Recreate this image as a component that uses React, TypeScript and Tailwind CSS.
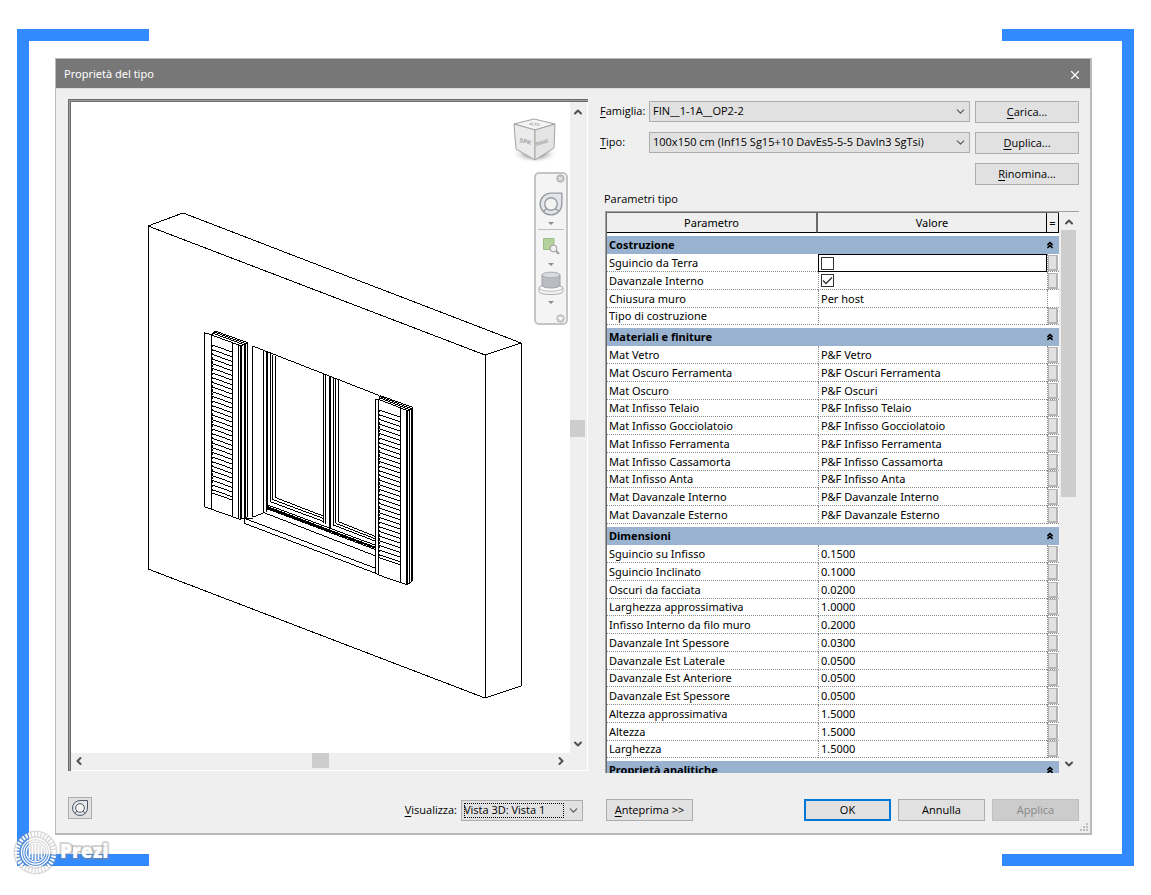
import { type ReactNode, useState } from "react";
import { ChevronDown, ChevronLeft, ChevronRight, ChevronsUp, ChevronUp, X } from "lucide-react";

type Param = {
  name: string;
  value: string | boolean;
  noButton?: boolean;
};

const groups: { title: string; params: Param[] }[] = [
  {
    title: "Costruzione",
    params: [
      { name: "Sguincio da Terra", value: false },
      { name: "Davanzale Interno", value: true },
      { name: "Chiusura muro", value: "Per host", noButton: true },
      { name: "Tipo di costruzione", value: "" },
    ],
  },
  {
    title: "Materiali e finiture",
    params: [
      { name: "Mat Vetro", value: "P&F Vetro" },
      { name: "Mat Oscuro Ferramenta", value: "P&F Oscuri Ferramenta" },
      { name: "Mat Oscuro", value: "P&F Oscuri" },
      { name: "Mat Infisso Telaio", value: "P&F Infisso Telaio" },
      { name: "Mat Infisso Gocciolatoio", value: "P&F Infisso Gocciolatoio" },
      { name: "Mat Infisso Ferramenta", value: "P&F Infisso Ferramenta" },
      { name: "Mat Infisso Cassamorta", value: "P&F Infisso Cassamorta" },
      { name: "Mat Infisso Anta", value: "P&F Infisso Anta" },
      { name: "Mat Davanzale Interno", value: "P&F Davanzale Interno" },
      { name: "Mat Davanzale Esterno", value: "P&F Davanzale Esterno" },
    ],
  },
  {
    title: "Dimensioni",
    params: [
      { name: "Sguincio su Infisso", value: "0.1500" },
      { name: "Sguincio Inclinato", value: "0.1000" },
      { name: "Oscuri da facciata", value: "0.0200" },
      { name: "Larghezza approssimativa", value: "1.0000" },
      { name: "Infisso Interno da filo muro", value: "0.2000" },
      { name: "Davanzale Int Spessore", value: "0.0300" },
      { name: "Davanzale Est Laterale", value: "0.0500" },
      { name: "Davanzale Est Anteriore", value: "0.0500" },
      { name: "Davanzale Est Spessore", value: "0.0500" },
      { name: "Altezza approssimativa", value: "1.5000" },
      { name: "Altezza", value: "1.5000" },
      { name: "Larghezza", value: "1.5000" },
    ],
  },
  { title: "Proprietà analitiche", params: [] },
];

export default function App() {
  return (
    <div className="min-h-screen bg-white px-[17px] pt-[29px] pb-7 text-black">
      <main className="relative">
        <BracketEnds />
        <div className="border-x-[12px] border-[#328aff] pt-[17px] pr-[30px] pb-[19px] pl-[26px]">
          <TypeDialog />
        </div>
        <BracketEnds />
        <PreziMark />
      </main>
    </div>
  );
}

function BracketEnds() {
  return (
    <div className="flex justify-between">
      <div className="h-3 w-[132px] bg-[#328aff]" />
      <div className="h-3 w-[132px] bg-[#328aff]" />
    </div>
  );
}

function TypeDialog() {
  return (
    <section
      aria-label="Proprietà del tipo"
      className="relative border border-r-2 border-b-2 border-[#b9b9b9] bg-[#efefef] font-['Open_Sans',sans-serif] text-[11px]"
    >
      <header className="flex h-[30px] items-center justify-between border-b border-[#dcdcdc] bg-[#777777] pt-[2px] pr-2 pl-2 text-white">
        <h1 className="font-['Noto_Sans',sans-serif] text-[11px]">Proprietà del tipo</h1>
        <button type="button" aria-label="Chiudi">
          <X className="size-[14px]" strokeWidth={2} />
        </button>
      </header>

      <div className="flex gap-[10px] pt-[10px] pr-[11px] pl-3">
        <Preview />
        <div className="w-[479px] shrink-0">
          <TypeFields />
          <ParamTable />
        </div>
      </div>

      <footer className="flex h-[60px] items-start gap-[10px] pt-6 pr-[11px] pl-3">
        <div className="flex flex-1 items-start">
          <button
            type="button"
            aria-label="Ruota di navigazione"
            className="flex h-[22px] w-6 items-center justify-center border border-[#adadad] bg-[#e1e1e1]"
          >
            <WheelIcon className="size-[18px]" stroke="#4b5663" />
          </button>
          <div className="ml-auto flex items-center gap-1 pt-[3px] pr-[7px]">
            <label htmlFor="view">
              <Mnemonic text="Visualizza:" />
            </label>
            <Combo id="view" value="Vista 3D: Vista 1" className="w-[122px]" focused />
          </div>
        </div>
        <div className="flex w-[479px] shrink-0 items-start gap-[7px] pt-[2px] pl-[6px]">
          <PushButton className="mr-auto w-[87px]">
            <Mnemonic text="Anteprima >>" />
          </PushButton>
          <button type="button" className="h-[22px] w-[87px] border-2 border-[#0078d7] bg-[#e1e1e1]">
            OK
          </button>
          <PushButton className="w-[87px]">Annulla</PushButton>
          <button
            type="button"
            disabled
            className="h-[22px] w-[87px] border border-[#bfbfbf] bg-[#cccccc] text-[#888888]"
          >
            Applica
          </button>
        </div>
      </footer>
      <svg className="absolute right-0 bottom-0 size-[11px]" viewBox="0 0 11 11" fill="#bdbdbd" aria-hidden="true">
        <path d="M7 1h2v2H7zM4 4h2v2H4zM7 4h2v2H7zM1 7h2v2H1zM4 7h2v2H4zM7 7h2v2H7z" />
      </svg>
    </section>
  );
}

function Mnemonic({ text }: { text: string }) {
  return (
    <>
      <span className="underline underline-offset-2">{text[0]}</span>
      {text.slice(1)}
    </>
  );
}

function PushButton({ className, children }: { className: string; children: ReactNode }) {
  return (
    <button type="button" className={`h-[22px] border border-[#adadad] bg-[#e1e1e1] ${className}`}>
      {children}
    </button>
  );
}

function Combo({
  id,
  value,
  className,
  focused,
}: {
  id: string;
  value: string;
  className: string;
  focused?: boolean;
}) {
  return (
    <div className={`relative h-[21px] border border-[#adadad] bg-[#e1e1e1] ${className}`}>
      <select
        id={id}
        className={`block h-[19px] w-full appearance-none bg-transparent pr-5 outline-none ${focused ? "pl-[2px]" : "pl-[3px]"}`}
      >
        <option>{value}</option>
      </select>
      {focused && (
        <span className="pointer-events-none absolute inset-y-[2px] right-[18px] left-[2px] border border-dotted border-black" />
      )}
      <ChevronDown
        className="pointer-events-none absolute top-[3px] right-[2px] size-[13px] text-[#555555]"
        strokeWidth={2}
      />
    </div>
  );
}

function TypeFields() {
  return (
    <div>
      <div className="grid grid-cols-[49px_1fr_104px] gap-y-[9px] pt-[2px]">
        <label htmlFor="family" className="leading-5">
          <Mnemonic text="Famiglia:" />
        </label>
        <Combo id="family" value="FIN__1-1A__OP2-2" className="mr-[5px]" />
        <PushButton className="w-full">
          <Mnemonic text="Carica..." />
        </PushButton>
        <label htmlFor="type" className="leading-5">
          <Mnemonic text="Tipo:" />
        </label>
        <Combo id="type" value="100x150 cm (Inf15 Sg15+10 DavEs5-5-5 DavIn3 SgTsi)" className="mr-[5px]" />
        <PushButton className="w-full">
          <Mnemonic text="Duplica..." />
        </PushButton>
        <PushButton className="col-start-3 w-full">
          <Mnemonic text="Rinomina..." />
        </PushButton>
      </div>
      <p className="pt-[6px] pb-1 pl-1 leading-4">Parametri tipo</p>
    </div>
  );
}

function ParamTable() {
  return (
    <div className="ml-[5px] flex h-[562px] overflow-hidden border-t border-l border-[#a0a0a0] bg-white">
      <div className="min-w-0 flex-1 overflow-hidden border-t border-l border-[#696969]">
        <table className="w-full table-fixed border-separate border-spacing-0 font-['Noto_Sans',sans-serif] text-[11px] leading-4">
          <colgroup>
            <col className="w-[211px]" />
            <col />
            <col className="w-3" />
          </colgroup>
          <thead>
            <tr className="h-5 bg-[#efefef]">
              <th className="border-r-2 border-b border-r-[#696969] border-b-black p-0 font-normal">Parametro</th>
              <th className="border-r border-b border-black p-0 font-normal">Valore</th>
              <th className="border-r border-b border-black p-0 font-normal">=</th>
            </tr>
          </thead>
          {groups.map((group) => (
            <tbody key={group.title}>
              <tr className="h-[21px]">
                <th
                  colSpan={3}
                  scope="rowgroup"
                  className="border-t-[3px] border-white bg-[#98b2d0] bg-clip-padding p-0 pl-[2px] text-left font-bold"
                >
                  <div className="flex items-center justify-between pr-1">
                    {group.title}
                    <button type="button" aria-label={`Comprimi ${group.title}`}>
                      <ChevronsUp className="size-[10px]" strokeWidth={4} />
                    </button>
                  </div>
                </th>
              </tr>
              {group.params.map((param) => (
                <ParamRow key={param.name} param={param} />
              ))}
            </tbody>
          ))}
        </table>
      </div>
      <div className="flex w-5 flex-col items-center bg-[#efefef] pt-1 pr-[3px] pb-[3px] pl-[2px]">
        <ChevronUp className="size-3 text-[#505050]" strokeWidth={4} />
        <div className="mt-[2px] h-[267px] w-[15px] bg-[#cdcdcd]" />
        <ChevronDown className="mt-auto size-3 text-[#505050]" strokeWidth={4} />
      </div>
    </div>
  );
}

function ParamRow({ param }: { param: Param }) {
  const [checked, setChecked] = useState(param.value === true);
  const isFocused = param.value === false;

  return (
    <tr className="h-[18px] nth-[4n+1]:h-[17px]">
      <td className="border-b border-dotted border-[#8c8c8c] p-0 pl-[2px] leading-4">{param.name}</td>
      <td
        className={
          isFocused
            ? "border border-black p-0 pl-[2px] outline outline-black -outline-offset-1"
            : "border-b border-l border-dotted border-[#8c8c8c] p-0 pl-[2px] leading-4"
        }
      >
        {typeof param.value === "boolean" ? (
          <label className="grid size-[13px]">
            <input
              type="checkbox"
              aria-label={param.name}
              checked={checked}
              onChange={(e) => setChecked(e.target.checked)}
              className="col-start-1 row-start-1 size-[13px] appearance-none border border-[#333333] bg-white"
            />
            {checked && (
              <svg
                viewBox="0 0 13 13"
                className="pointer-events-none col-start-1 row-start-1 size-[13px]"
                fill="none"
                stroke="#333333"
                strokeWidth="1.300"
              >
                <path d="M2 6.500 5 9.500 11 3.500" />
              </svg>
            )}
          </label>
        ) : (
          param.value
        )}
      </td>
      <td className="border-b border-l border-dotted border-[#8c8c8c] p-0">
        {!param.noButton && (
          <button
            type="button"
            aria-label={`Associa ${param.name}`}
            className="block h-4 w-[10px] border border-r-2 border-b-2 border-[#b4b4b4] bg-[#e1e1e1]"
          />
        )}
      </td>
    </tr>
  );
}

function Preview() {
  return (
    <div className="min-w-0 flex-1">
      <div className="mr-[2px] border-t-[3px] border-l-[3px] border-double border-[#696969] bg-[#a0a0a0]">
        <div className="border-r border-b border-white bg-[#efefef]">
          <div className="flex">
            <div className="relative h-[651px] min-w-0 flex-1 bg-white">
              <WallDrawing />
              <ViewCube />
              <NavBar />
            </div>
            <div className="flex w-[17px] flex-col items-center justify-between pt-1 pr-[2px] pb-[3px]">
              <ChevronUp className="size-3 text-[#505050]" strokeWidth={4} />
              <div className="h-[17px] w-[15px] bg-[#cdcdcd]" />
              <ChevronDown className="size-3 text-[#505050]" strokeWidth={4} />
            </div>
          </div>
          <div className="flex h-[17px] items-center justify-between pr-[20px] pb-[2px] pl-[2px]">
            <ChevronLeft className="size-3 text-[#505050]" strokeWidth={4} />
            <div className="h-[15px] w-[17px] bg-[#cdcdcd]" />
            <ChevronRight className="size-3 text-[#505050]" strokeWidth={4} />
          </div>
        </div>
      </div>
    </div>
  );
}

const slats = Array.from({ length: 32 }, (_, i) => 105 + i * 14);

function Shutter() {
  return (
    <>
      <path d="M43 68V590L65 598V75ZM65 75 75 63 173 98 154 108ZM69 70 162 104M72 66 168 101M65 598 150 628 154 624V108M147 105V627M127 100V620" />
      <path d="M151 107V627M163 104V624M168 102V624M172 98V622M150 628 172 622" />
      {slats.map((y) => (
        <path key={y} d={`M65 ${y}l62 21`} />
      ))}
      <path d="M65 549 127 570" />
      <path d="M67 105V545" strokeDasharray="6 6" />
    </>
  );
}

function WallDrawing() {
  return (
    <svg
      viewBox="0 0 499 651"
      preserveAspectRatio="xMinYMin meet"
      className="size-full"
      fill="none"
      stroke="#000000"
      shapeRendering="crispEdges"
      role="img"
      aria-label="Vista 3D della finestra"
    >
      <path d="M77 124 112 111 450 241V584L414 596 77 467ZM77 124 414 253V596M414 253 450 241" />
      <g transform="translate(119 208) scale(0.3333)" strokeWidth="3">
        <path d="M188 622V108L566 256M188 622 222 608V121M163 625H188M163 640V625L557 775M163 640 557 790" />
        <path d="M229 124V606M234 126V600M241 130V575L402 635M249 134V569L402 626M257 137V563L402 619" />
        <path d="M402 190V640M407 193V642M418 197V655M422 199V655M430 203V645L557 694M437 206V640L557 687M445 209V635L557 680" />
        <path d="M228 583 402 648 557 706M228 588 557 712M228 595 557 719M222 608 557 738" />
        <path d="M228 592 557 714" strokeWidth="5" />
        <path d="M557 268 566 270V795L557 790Z" fill="#ffffff" />
        <path d="M566 270 571 257 668 292V812L652 825 566 795Z" fill="#ffffff" />
        <Shutter />
        <path d="M566 268 655 303 668 292M570 264 658 299M571 260 664 296M631 294V817M650 301V824M654 303V824M659 299V820M664 296V816" />
        <path d="M569 300V740" strokeDasharray="6 6" />
        {slats.map((y) => (
          <path key={y} d={`M568 ${y + 195}l63 21`} />
        ))}
        <path d="M568 743 631 764" />
      </g>
    </svg>
  );
}

function ViewCube() {
  return (
    <svg className="absolute top-[14px] right-[12px] h-[52px] w-[50px]" viewBox="0 0 50 52" aria-hidden="true">
      <defs>
        <radialGradient id="cube-shadow">
          <stop offset="0.4" stopColor="#8f8f8f" stopOpacity="0.7" />
          <stop offset="1" stopColor="#ffffff" stopOpacity="0" />
        </radialGradient>
      </defs>
      <ellipse cx="27" cy="38" rx="23" ry="9" fill="url(#cube-shadow)" />
      <g stroke="#a3a3a3" strokeWidth="1" strokeLinejoin="round">
        <path d="M6 8 26 3 47 8 27 14Z" fill="#f4f4f4" />
        <path d="M6 8 27 14V44L8 33Z" fill="#ebebeb" />
        <path d="M27 14 47 8 46 32 27 44Z" fill="#e4e4e4" />
      </g>
      <g fill="#a0a0a0" fontFamily="Liberation Sans, sans-serif" fontWeight="bold">
        <text fontSize="6" transform="rotate(14 11 26)" x="11" y="26">
          SPK
        </text>
        <text fontSize="5" transform="rotate(-16 28 30)" x="28" y="30">
          SINIS
        </text>
        <text fontSize="4" transform="rotate(6 21 9)" x="21" y="9">
          ALTO
        </text>
      </g>
    </svg>
  );
}

function WheelIcon({ className, stroke }: { className: string; stroke: string }) {
  return (
    <svg className={className} viewBox="0 0 24 24" fill="none" stroke={stroke} strokeWidth="1.300" aria-hidden="true">
      <path d="M12 2H22V12A10 10 0 1 1 12 2Z" fill="#e3e6ea" />
      <circle cx="12" cy="12" r="5.800" fill="#f3f3f3" />
      <path d="M8 16.200 5 19M16 16.200 19 19" />
    </svg>
  );
}

function SmallArrow() {
  return (
    <svg className="h-[3px] w-[6px]" viewBox="0 0 6 3" fill="#8c8c8c" aria-hidden="true">
      <path d="M0 0H6L3 3Z" />
    </svg>
  );
}

function NavBar() {
  return (
    <div className="absolute top-[70px] right-[2px] flex h-[153px] w-[34px] flex-col items-center rounded-[5px] border-2 border-[#c4c4c4] bg-[#f4f4f4]">
      <button type="button" aria-label="Chiudi barra" className="mr-px self-end">
        <svg className="size-[9px]" viewBox="0 0 9 9" fill="#ffffff" stroke="#b0b0b0">
          <circle cx="4.500" cy="4.500" r="3.700" fill="#c4c4c4" />
          <path d="M3 3 6 6M6 3 3 6" stroke="#ffffff" />
        </svg>
      </button>
      <button type="button" aria-label="Ruota di navigazione" className="mt-2">
        <WheelIcon className="size-[26px]" stroke="#9a9ca2" />
      </button>
      <div className="mt-[5px]">
        <SmallArrow />
      </div>
      <div className="mt-1 h-px w-[26px] bg-[#bdbdbd]" />
      <button type="button" aria-label="Zoom regione" className="mt-2">
        <svg className="size-[17px]" viewBox="0 0 17 17" fill="none">
          <path d="M.500.500H11V11.500H.500Z" fill="#b3d19d" stroke="#9dbd86" />
          <circle cx="10.500" cy="10.500" r="3.400" fill="#f1f1f1" stroke="#9a9a9a" />
          <path d="m13 13 3 3" stroke="#9a9a9a" strokeWidth="1.800" />
        </svg>
      </button>
      <div className="mt-2">
        <SmallArrow />
      </div>
      <button type="button" aria-label="Orbita" className="mt-[5px]">
        <svg className="h-6 w-[26px]" viewBox="0 0 26 24" fill="none">
          <path d="M1 17q0-3 12-3t12 3v3q0 3.500-12 3.500T1 20Z" fill="#f3f3f3" stroke="#b0b0b0" />
          <ellipse cx="13" cy="17" rx="11.500" ry="3.200" fill="#fbfbfb" stroke="#bdbdbd" />
          <path d="M4 4V14q1 3 9 3t9-3V4Z" fill="#b9bdc3" stroke="#9da0a5" />
          <ellipse cx="13" cy="4" rx="9" ry="2.800" fill="#d9dcdf" stroke="#a9acb0" />
        </svg>
      </button>
      <div className="mt-[6px]">
        <SmallArrow />
      </div>
      <button type="button" aria-label="Opzioni barra" className="mt-auto mr-px self-end">
        <svg className="size-[9px]" viewBox="0 0 9 9" stroke="#b0b0b0">
          <circle cx="4.500" cy="4.500" r="3.700" fill="#d4d4d4" />
          <path d="M2.500 3.500H6.500L4.500 6Z" fill="#ffffff" stroke="#ffffff" strokeWidth="0.500" />
        </svg>
      </button>
    </div>
  );
}

function PreziMark() {
  return (
    <div className="absolute -bottom-[9px] -left-1 flex items-center gap-[2px]">
      <svg className="size-[45px]" viewBox="0 0 45 45" fill="none" aria-hidden="true">
        <circle cx="22.500" cy="22.500" r="22" fill="#909090" fillOpacity="0.350" />
        <g stroke="#ffffff">
          <circle cx="22.500" cy="22.500" r="18.500" strokeWidth="4.500" strokeDasharray="2 1.320" />
          <circle cx="22.500" cy="22.500" r="14" strokeWidth="1.300" />
          <circle cx="22.500" cy="22.500" r="11.700" strokeWidth="1.200" />
          <circle cx="22.500" cy="22.500" r="9.400" strokeWidth="1.200" />
          <path d="M16.500 17V28M19.500 15V30M22.500 14V31M25.500 15V30M28.500 17V28" strokeWidth="1.700" />
        </g>
      </svg>
      <span className="pb-1 font-['Open_Sans',sans-serif] text-[19px] leading-5 font-extrabold text-white [-webkit-text-stroke:4px_rgba(130,130,130,0.350)] [paint-order:stroke_fill]">
        Prezi
      </span>
    </div>
  );
}
